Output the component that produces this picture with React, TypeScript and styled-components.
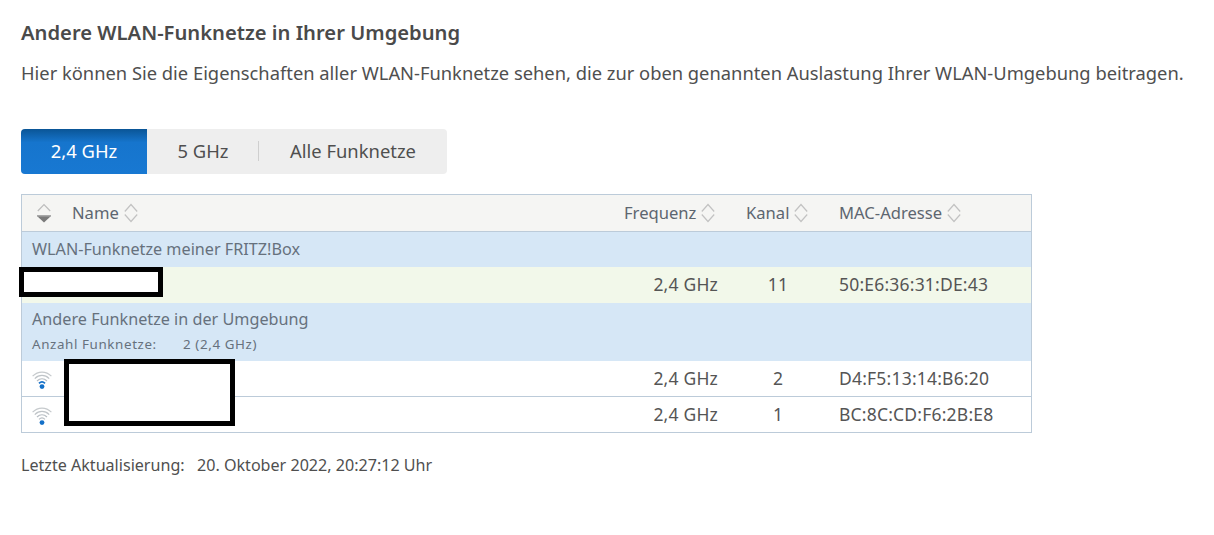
import React from "react";
import styled, { createGlobalStyle } from "styled-components";

const Global = createGlobalStyle`
  html, body { margin: 0; padding: 0; background: #fff; }
  body { font-family: "Noto Sans", "Open Sans", "Liberation Sans", sans-serif; color: #4b4b4b; }
`;

const Page = styled.main`
  position: relative;
  width: 1214px;
  height: 535px;
  padding: 19px 0 0 21px;
  box-sizing: border-box;
  overflow: hidden;
`;

const Title = styled.h2`
  margin: 0;
  font-size: 20.2px;
  line-height: 26px;
  font-weight: 600;
  color: #4a4a4a;
`;

const Lead = styled.p`
  margin: 15px 0 0;
  font-size: 18.33px;
  line-height: 26px;
  color: #4f4f4f;
  white-space: nowrap;
`;

const Tabs = styled.div`
  display: flex;
  width: fit-content;
  margin-top: 43px;
  height: 45px;
  background: #eeeeee;
  border-radius: 4px;
  align-items: stretch;
`;

const Tab = styled.div<{ $active?: boolean; $w: number; $divider?: boolean }>`
  position: relative;
  width: ${(p) => p.$w}px;
  display: flex;
  align-items: center;
  justify-content: center;
  padding-bottom: 2px;
  font-size: 18.4px;
  border-radius: ${(p) => (p.$active ? "4px 0 0 4px" : "0")};
  color: ${(p) => (p.$active ? "#ffffff" : "#4f4f4f")};
  background: ${(p) =>
    p.$active ? "linear-gradient(to bottom, #0a5596 0%, #1675cd 30%, #1878d2 100%)" : "transparent"};
  box-sizing: border-box;
  ${(p) =>
    p.$divider
      ? `&::after { content: ""; position: absolute; right: 0; top: 12px; height: 20px; width: 1px; background: #cfcfcf; }`
      : ""}
`;

const Table = styled.div`
  width: 1011px;
  margin-top: 20px;
  border: 1px solid #bccbd9;
  box-sizing: border-box;
`;

const columns = "50px 1fr 110px 108px 199px";

const HeadRow = styled.div`
  display: grid;
  grid-template-columns: ${columns};
  height: 37px;
  box-sizing: border-box;
  align-items: center;
  padding-bottom: 1px;
  background: #f5f5f3;
  border-bottom: 1px solid #bccbd9;
  font-size: 16.6px;
  color: #5d6670;
`;

const HeadCell = styled.div<{ $pad?: number }>`
  display: flex;
  align-items: center;
  gap: 5px;
  padding-left: ${(p) => p.$pad ?? 0}px;
`;

const SortCell = styled.div`
  display: flex;
  align-items: center;
  padding-left: 15px;
`;

const IconCell = styled.div`
  display: flex;
  align-items: center;
  padding: 3px 0 0 10px;
`;

const Group = styled.div<{ $h: number; $top: number }>`
  height: ${(p) => p.$h}px;
  background: #d6e7f6;
  padding: ${(p) => p.$top}px 0 0 10px;
  box-sizing: border-box;
  font-size: 16.2px;
  line-height: 22px;
  color: #66717d;
`;

const GroupInfo = styled.div`
  display: flex;
  margin-top: 5px;
  font-size: 13.4px;
  line-height: 18px;
  letter-spacing: 0.6px;
`;

const GroupLabel = styled.span`
  width: 151px;
`;

const Row = styled.div<{ $green?: boolean; $h: number; $line?: boolean }>`
  display: grid;
  grid-template-columns: ${columns};
  height: ${(p) => p.$h}px;
  box-sizing: border-box;
  align-items: center;
  padding-bottom: ${(p) => (p.$green ? 2 : 1)}px;
  font-size: 17.5px;
  letter-spacing: 0.2px;
  color: #555555;
  background: ${(p) => (p.$green ? "#f2f8ea" : "#ffffff")};
  border-bottom: ${(p) => (p.$line ? "1px solid #bccbd9" : "0")};
`;

const Freq = styled.div`
  text-align: right;
  padding-right: 6px;
`;

const Channel = styled.div`
  text-align: center;
`;

const Mac = styled.div`
  padding-left: 7px;
  white-space: nowrap;
`;

const Footer = styled.div`
  display: flex;
  margin-top: 21px;
  font-size: 16.1px;
  line-height: 22px;
  color: #4f4f4f;
  white-space: nowrap;
`;

const FooterLabel = styled.span`
  width: 176px;
`;

const Redaction = styled.div<{ $x: number; $y: number; $w: number; $h: number }>`
  position: absolute;
  left: ${(p) => p.$x}px;
  top: ${(p) => p.$y}px;
  width: ${(p) => p.$w}px;
  height: ${(p) => p.$h}px;
  box-sizing: border-box;
  border: 5px solid #000;
  background: #fff;
`;

const SortIcon = () => (
  <svg width="14" height="20" viewBox="0 0 14 20" fill="none">
    <path d="M0.8 8.5 L7 1.5 L13.2 8.5" stroke="#c2c2c2" strokeWidth="1.2" />
    <path d="M0.8 11.5 L7 18.5 L13.2 11.5" stroke="#c2c2c2" strokeWidth="1.2" />
  </svg>
);

const ActiveSortIcon = () => (
  <svg width="14" height="20" viewBox="0 0 14 20" fill="none">
    <path d="M0.8 8 L7 1.5 L13.2 8" stroke="#bdbdbd" strokeWidth="1.2" />
    <path d="M0 13 H14 L7 19.5 Z" fill="#7a7a7a" />
    <path d="M0 12 H14 V13.5 H0 Z" fill="#a8a8a8" />
  </svg>
);

const WifiIcon = ({ active }: { active?: boolean }) => (
  <svg width="20" height="20" viewBox="0 0 20 20" fill="none">
    <path d="M0.6 6.2 C6 0.8 14 0.8 19.4 6.2" stroke="#c6cacd" strokeWidth="1.2" />
    <path d="M2.8 8.6 C7 4.4 13 4.4 17.2 8.6" stroke="#bfc4c8" strokeWidth="1.2" />
    <path d="M5 11 C8 8 12 8 15 11" stroke="#b8bec4" strokeWidth="1.2" />
    <path
      d="M7 13.4 C8.8 11.6 11.2 11.6 13 13.4"
      stroke={active ? "#1470c8" : "#b8bec4"}
      strokeWidth={active ? 1.8 : 1.2}
    />
    <circle cx="10" cy="16.6" r="2.4" fill="#1470c8" />
  </svg>
);

export default function App() {
  return (
    <Page>
      <Global />
      <Title>Andere WLAN-Funknetze in Ihrer Umgebung</Title>
      <Lead>
        Hier können Sie die Eigenschaften aller WLAN-Funknetze sehen, die zur oben genannten Auslastung Ihrer
        WLAN-Umgebung beitragen.
      </Lead>
      <Tabs>
        <Tab $active $w={126}>2,4 GHz</Tab>
        <Tab $w={112} $divider>5 GHz</Tab>
        <Tab $w={188}>Alle Funknetze</Tab>
      </Tabs>
      <Table>
        <HeadRow>
          <SortCell><ActiveSortIcon /></SortCell>
          <HeadCell>Name <SortIcon /></HeadCell>
          <HeadCell $pad={10}>Frequenz <SortIcon /></HeadCell>
          <HeadCell $pad={22}>Kanal <SortIcon /></HeadCell>
          <HeadCell $pad={7}>MAC-Adresse <SortIcon /></HeadCell>
        </HeadRow>
        <Group $h={35} $top={6}>WLAN-Funknetze meiner FRITZ!Box</Group>
        <Row $green $h={36}>
          <span />
          <span />
          <Freq>2,4 GHz</Freq>
          <Channel>11</Channel>
          <Mac>50:E6:36:31:DE:43</Mac>
        </Row>
        <Group $h={58} $top={5}>
          Andere Funknetze in der Umgebung
          <GroupInfo>
            <GroupLabel>Anzahl Funknetze:</GroupLabel>
            <span>2 (2,4 GHz)</span>
          </GroupInfo>
        </Group>
        <Row $h={36} $line>
          <IconCell><WifiIcon active /></IconCell>
          <span />
          <Freq>2,4 GHz</Freq>
          <Channel>2</Channel>
          <Mac>D4:F5:13:14:B6:20</Mac>
        </Row>
        <Row $h={35}>
          <IconCell><WifiIcon /></IconCell>
          <span />
          <Freq>2,4 GHz</Freq>
          <Channel>1</Channel>
          <Mac>BC:8C:CD:F6:2B:E8</Mac>
        </Row>
      </Table>
      <Footer>
        <FooterLabel>Letzte Aktualisierung:</FooterLabel>
        <span>20. Oktober 2022, 20:27:12 Uhr</span>
      </Footer>
      <Redaction $x={19} $y={267} $w={144} $h={30} />
      <Redaction $x={64} $y={359} $w={171} $h={67} />
    </Page>
  );
}
